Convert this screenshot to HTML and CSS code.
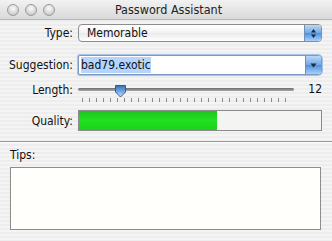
FILE: index.html
```html
<!DOCTYPE html>
<html lang="en">
<head>
    <meta charset="UTF-8">
    <title>Password Assistant</title>
    <link rel="stylesheet" href="styles.css">
</head>
<body>
    <div class="window">
        <!-- Title bar -->
        <div class="titlebar">
            <div class="lights">
                <span class="light"></span>
                <span class="light"></span>
                <span class="light"></span>
            </div>
            <div class="title">Password Assistant</div>
        </div>

        <div class="form">
            <label class="label">Type:</label>
            <div class="popup">
                <span class="popup-text">Memorable</span>
                <span class="popup-btn">
                    <svg width="7" height="11" viewBox="0 0 7 11"><path d="M3.5 1 L6 4.5 H1 Z M3.5 10 L6 6.5 H1 Z" fill="#1b2a45"/></svg>
                </span>
            </div>

            <label class="label row-suggest">Suggestion:</label>
            <div class="combo row-suggest">
                <span class="combo-text"><span class="selected">bad79.exotic</span></span>
                <span class="combo-btn">
                    <svg width="7" height="5" viewBox="0 0 7 5"><path d="M0.5 0.5 H6.5 L3.5 4.5 Z" fill="#1b2a45"/></svg>
                </span>
            </div>

            <label class="label label-length">Length:</label>
            <div class="slider-row">
                <div class="slider">
                    <div class="track"></div>
                    <svg class="thumb" width="13" height="14" viewBox="0 0 13 14">
                        <defs>
                            <linearGradient id="tg" x1="0" y1="0" x2="0" y2="1">
                                <stop offset="0" stop-color="#3a6fb8"/>
                                <stop offset="0.5" stop-color="#6fa6e6"/>
                                <stop offset="1" stop-color="#cfe6ff"/>
                            </linearGradient>
                        </defs>
                        <path d="M1.5 1.5 H11.5 V8 L6.5 13 L1.5 8 Z" fill="url(#tg)" stroke="#3b5a8a" stroke-width="1"/>
                    </svg>
                    <div class="ticks"></div>
                </div>
                <span class="value">12</span>
            </div>

            <label class="label row-quality">Quality:</label>
            <div class="meter row-quality">
                <div class="meter-fill" style="width: 57%"></div>
            </div>
        </div>

        <hr class="separator">

        <div class="tips">
            <div class="tips-label">Tips:</div>
            <div class="tips-box"></div>
        </div>
    </div>
</body>
</html>
```

FILE: styles.css
```css
body {
    margin: 0;
    font-family: "DejaVu Sans Condensed", "DejaVu Sans", sans-serif;
    font-size: 12px;
    color: #111;
}

.window {
    width: 332px;
    height: 241px;
    overflow: hidden;
    background: repeating-linear-gradient(to bottom, #ededed 0, #ededed 2px, #f4f4f4 2px, #f4f4f4 4px);
}

/* Title bar */
.titlebar {
    height: 19px;
    display: flex;
    align-items: center;
    background: linear-gradient(to bottom, #f2f2f2, #d9d9d9);
    border-bottom: 1px solid #b8b8b8;
    position: relative;
}

.lights {
    display: flex;
    gap: 6px;
    padding-left: 7px;
}

.light {
    width: 10px;
    height: 10px;
    border-radius: 50%;
    border: 1px solid #9a9a9a;
    background: radial-gradient(circle at 50% 35%, #fbfbfb, #cfcfcf 70%, #b5b5b5);
}

.title {
    position: absolute;
    left: 0;
    right: 0;
    text-align: center;
    font-size: 12.5px;
    color: #222;
    padding-left: 5px;
}

/* Form rows */
.form {
    display: grid;
    grid-template-columns: 73px 244px;
    column-gap: 5px;
    align-items: center;
    padding-top: 4px;
}

.label {
    text-align: right;
}

.row-suggest {
    margin-top: 13px;
}

.row-quality {
    margin-top: 2px;
}

.popup {
    height: 16px;
    display: flex;
    border: 1px solid #8c8c8c;
    border-radius: 4px;
    background: linear-gradient(to bottom, #ffffff, #f3f3f3 50%, #e9e9e9 51%, #ffffff);
    overflow: hidden;
}

.popup-text {
    flex: 1;
    padding-left: 8px;
    line-height: 16px;
}

.popup-btn {
    width: 16px;
    display: flex;
    align-items: center;
    justify-content: center;
    border-left: 1px solid #6f8fb8;
    background: linear-gradient(to bottom, #bcd8f5, #6fa8e6 50%, #4f8fdc 51%, #a9d0fb);
}

.combo {
    height: 18px;
    display: flex;
    border: 1px solid #7c9ac3;
    border-radius: 2px 4px 4px 2px;
    box-shadow: 0 0 0 1px #a9c3e6;
    background: #fff;
}

.combo-text {
    flex: 1;
    padding-left: 2px;
    line-height: 18px;
}

.selected {
    background: #b5d5ff;
    padding: 1px 0;
}

.combo-btn {
    width: 15px;
    display: flex;
    align-items: center;
    justify-content: center;
    border-left: 1px solid #6f8fb8;
    border-radius: 0 3px 3px 0;
    background: linear-gradient(to bottom, #bcd8f5, #6fa8e6 50%, #4f8fdc 51%, #a9d0fb);
}

.label-length {
    align-self: start;
    margin-top: 8px;
}

.slider-row {
    display: flex;
    height: 24px;
    margin-top: 9px;
}

.slider {
    position: relative;
    width: 219px;
}

.track {
    position: absolute;
    left: 0;
    right: 0;
    top: 4px;
    height: 3px;
    border-radius: 2px;
    background: linear-gradient(to bottom, #6b6b6b, #a9a9a9);
}

.thumb {
    position: absolute;
    left: 36px;
    top: 0;
}

.ticks {
    position: absolute;
    left: 4px;
    right: 4px;
    top: 14px;
    height: 4px;
    background: repeating-linear-gradient(to right, #8a8a8a 0, #8a8a8a 1px, transparent 1px, transparent 7px);
}

.value {
    margin-left: 14px;
    margin-top: -2px;
}

.meter {
    height: 19px;
    border: 1px solid #8a8a8a;
    background: #f4f4f2;
    display: flex;
}

.meter-fill {
    height: 100%;
    background: linear-gradient(to bottom, #1fc41f, #22e022 50%, #1ad21a);
}

.separator {
    margin: 10px 0 0 0;
    border: none;
    border-top: 1px solid #9a9a9a;
    border-bottom: 1px solid #fafafa;
    height: 0;
}

.tips {
    padding: 5px 11px 0 10px;
}

.tips-label {
    height: 19px;
}

.tips-box {
    height: 61px;
    border: 1px solid #8c8c8c;
    background: #fffffb;
}
```
